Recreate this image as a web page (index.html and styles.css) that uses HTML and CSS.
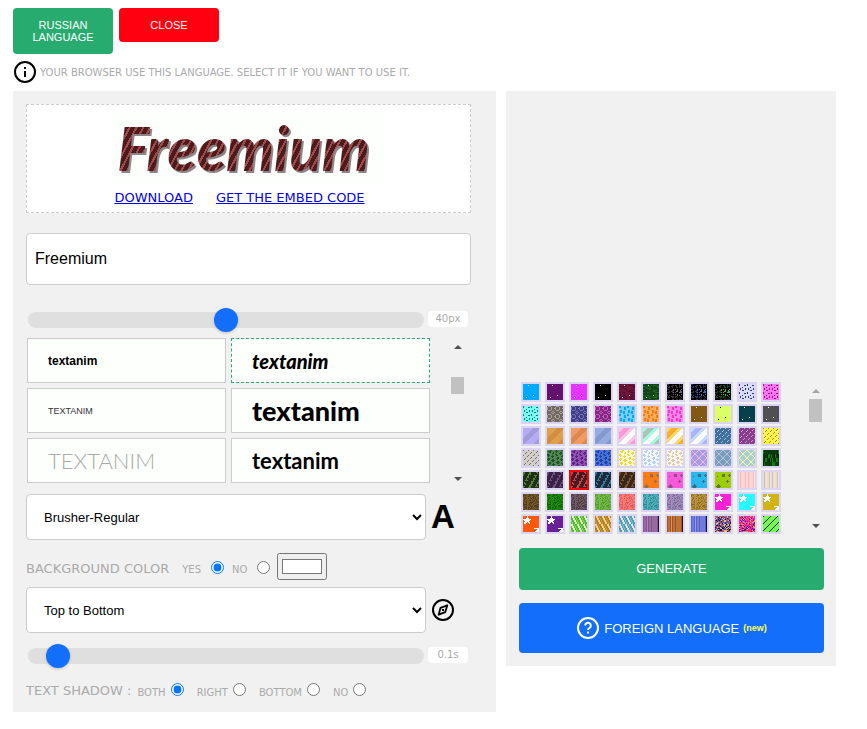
FILE: index.html
```html
<!DOCTYPE html>
<html lang="en">
<head>
<meta charset="utf-8">
<meta name="viewport" content="width=device-width, initial-scale=1">
<title>Text animator</title>
<link rel="stylesheet" href="styles.css">
</head>
<body>
<header class="top">
  <div class="lang-buttons">
    <button class="btn btn-small btn-green" type="button">RUSSIAN LANGUAGE</button>
    <button class="btn btn-small btn-red" type="button">CLOSE</button>
  </div>
  <p class="notice">
    <svg class="icon" viewBox="0 0 24 24" aria-hidden="true"><circle cx="12" cy="12" r="10" fill="none" stroke="currentColor" stroke-width="2"/><path d="M11 7h2v2h-2zM11 11h2v6h-2z" fill="currentColor"/></svg>
    <span>YOUR BROWSER USE THIS LANGUAGE. SELECT IT IF YOU WANT TO USE IT.</span>
  </p>
</header>
<main class="columns">
  <section class="panel editor">
    <div class="result">
      <div class="artwork"><span class="artwork-text">Freemium</span></div>
      <nav class="result-links"><a href="#download">DOWNLOAD</a><a href="#embed">GET THE EMBED CODE</a></nav>
    </div>
    <input class="text-field" type="text" value="Freemium" aria-label="Text">
    <div class="slider-row">
      <input class="slider" type="range" min="0" max="80" value="40" aria-label="Font size">
      <output class="value">40px</output>
    </div>
    <div class="font-picker">
      <div class="font-grid">
        <button class="font-card face-pixel" type="button">textanim</button>
        <button class="font-card face-brush selected" type="button">textanim</button>
        <button class="font-card face-narrow" type="button">TEXTANIM</button>
        <button class="font-card face-heavy" type="button">textanim</button>
        <button class="font-card face-dotted" type="button">TEXTANIM</button>
        <button class="font-card face-round" type="button">textanim</button>
      </div>
      <div class="scrollbar" aria-hidden="true"><i class="arrow up"></i><i class="thumb thumb-fonts"></i><i class="arrow down"></i></div>
    </div>
    <div class="select-row">
      <select class="select" aria-label="Font"><option>Brusher-Regular</option></select>
      <span class="letter-icon" aria-hidden="true">A</span>
    </div>
    <div class="options options-bg">
      <span class="caption">BACKGROUND COLOR</span>
      <label class="choice choice-wide">YES <input type="radio" name="bg" checked></label>
      <label class="choice choice-wide">NO <input type="radio" name="bg"></label>
      <input class="color" type="color" value="#ffffff" aria-label="Background color">
    </div>
    <div class="select-row">
      <select class="select" aria-label="Direction"><option>Top to Bottom</option></select>
      <svg class="icon" viewBox="0 0 24 24" aria-hidden="true"><circle cx="12" cy="12" r="10" fill="none" stroke="currentColor" stroke-width="2"/><path d="M16.3 7.3 14.2 14.2 7.7 16.7 9.5 9.8z" fill="none" stroke="currentColor" stroke-width="1.8" stroke-linejoin="round"/><path d="M11 11h2v2h-2z" fill="currentColor"/></svg>
    </div>
    <div class="slider-row slider-row-speed">
      <input class="slider" type="range" min="0" max="105" value="5" aria-label="Speed">
      <output class="value">0.1s</output>
    </div>
    <div class="options options-shadow">
      <span class="caption">TEXT SHADOW :</span>
      <label class="choice">BOTH <input type="radio" name="shadow" checked></label>
      <label class="choice">RIGHT <input type="radio" name="shadow"></label>
      <label class="choice">BOTTOM <input type="radio" name="shadow"></label>
      <label class="choice">NO <input type="radio" name="shadow"></label>
    </div>
  </section>
  <section class="panel textures">
    <div class="texture-picker">
      <div class="swatches" id="swatches"></div>
      <div class="scrollbar" aria-hidden="true"><i class="arrow up dim"></i><i class="thumb thumb-textures"></i><i class="arrow down"></i></div>
    </div>
    <button class="btn btn-green btn-generate" type="button">GENERATE</button>
    <button class="btn btn-blue btn-foreign" type="button">
      <svg class="icon" viewBox="0 0 24 24" aria-hidden="true"><circle cx="12" cy="12" r="10" fill="none" stroke="currentColor" stroke-width="2"/><path d="M9.2 9.6a2.8 2.8 0 1 1 4.3 2.4c-1 .6-1.5 1-1.5 2" fill="none" stroke="currentColor" stroke-width="2"/><path d="M11 15.5h2v2h-2z" fill="currentColor"/></svg>
      <span>FOREIGN LANGUAGE</span> <small class="new">(new)</small>
    </button>
  </section>
</main>
<script src="swatches.js"></script>
</body>
</html>
```
FILE: styles.css
```css
* { box-sizing: border-box; }
body {
  margin: 0;
  padding: 8px 31px 16px 13px;
  background: #fff;
  color: #000;
  font-family: "DejaVu Sans", Verdana, sans-serif;
  font-size: 13px;
}
button, input, select { font-family: "Liberation Sans", Arial, sans-serif; }
.icon { width: 24px; height: 24px; flex: none; display: block; }

.lang-buttons { display: flex; align-items: flex-start; gap: 6px; }
.btn { border: 0; border-radius: 4px; color: #fff; cursor: pointer; }
.btn-small { width: 100px; padding: 11px 15px; font-size: 11px; line-height: 12px; }
.btn-green { background: #27ab6e; }
.btn-red { background: #ff0010; }
.btn-blue { background: #136ffb; }
.notice {
  display: flex; align-items: center; gap: 3px;
  margin: 6px 0 7px; height: 24px;
  color: #aaa; font-size: 10px;
}
.notice .icon { color: #000; }

.columns { display: grid; grid-template-columns: 483fr 330fr; gap: 10px; align-items: start; }
.panel { background: #f1f1f1; min-width: 0; }
.editor { padding: 13px 25px 11px 13px; }

.result {
  display: flex; flex-direction: column; align-items: center;
  padding: 6px 0;
  border: 1px dashed #ccc; background: #fff;
}
.artwork {
  display: flex; align-items: center; justify-content: center;
  width: 271px; height: 74px; background: #fcfffc;
}
.artwork-text {
  padding: 0 14px 0 4px;
  font: italic 900 60px/72px Lato, sans-serif;
  color: transparent;
  background: repeating-linear-gradient(118deg, #4a1c1e 0 3px, #a5484a 3px 5px, #4a1c1e 5px 6px);
  -webkit-background-clip: text;
  background-clip: text;
  filter: drop-shadow(2px 2px 0 #8c8686);
}
.result-links { display: flex; gap: 23px; padding-right: 18px; line-height: 16px; margin-top: 5px; }
.result-links a { color: #0000ee; }

.text-field {
  display: block; width: 100%; height: 52px; margin-top: 20px; padding: 0 8px;
  border: 1px solid #ccc; border-radius: 4px; background: #fff; font-size: 16px;
}
.slider-row { display: flex; align-items: center; gap: 4px; height: 24px; margin-top: 23px; padding: 0 3px 0 2px; }
.slider-row-speed { margin-top: 11px; }
.slider {
  -webkit-appearance: none; appearance: none;
  flex: 1; min-width: 0; height: 16px; margin: 0;
  border-radius: 8px; background: #dfdfdf;
}
.slider::-webkit-slider-thumb {
  -webkit-appearance: none; appearance: none;
  width: 24px; height: 24px; border-radius: 50%;
  background: #136ffb; box-shadow: 0 1px 3px rgba(0, 0, 0, .2);
}
.value {
  width: 40px; height: 16px; margin-bottom: 2px; border-radius: 4px; background: #fff;
  color: #aaa; font-size: 10px; line-height: 16px; text-align: center;
}

.font-picker { display: flex; gap: 20px; margin-top: 6px; padding: 0 6px 0 1px; }
.font-grid { flex: 1; display: grid; grid-template-columns: 1fr 1fr; gap: 5px; }
.font-card {
  height: 45px; padding: 0 20px; overflow: hidden;
  border: 1px solid #ccc; background: #fcfffc; color: #000; text-align: left; white-space: nowrap;
}
.font-card.selected { border: 1px dashed #27ab6e; }
.face-pixel { font: bold 12px "Liberation Sans", sans-serif; }
.face-brush { font: italic 900 20px Lato, sans-serif; }
.face-narrow { font: 9px "Liberation Sans", sans-serif; color: #333; }
.face-heavy { font: 900 27px Lato, sans-serif; }
.face-dotted { font: 300 22px Lato, sans-serif; color: #aaa; }
.face-round { font: 700 22px Lato, sans-serif; }

.scrollbar { display: flex; flex-direction: column; align-items: center; width: 15px; }
.arrow { width: 0; height: 0; border: 4px solid transparent; }
.arrow.up { border-top: 0; border-bottom-color: #505050; margin-top: 7px; }
.arrow.up.dim { border-bottom-color: #a3a3a3; }
.arrow.down { border-bottom: 0; border-top-color: #505050; margin-top: auto; }
.font-picker .scrollbar { padding-bottom: 2px; }
.thumb { width: 13px; background: #c1c1c1; }
.thumb-fonts { height: 17px; margin-top: 28px; }
.thumb-textures { height: 23px; margin-top: 6px; }

.select-row { display: grid; grid-template-columns: 1fr 40px; align-items: center; gap: 5px; }
.font-picker + .select-row { margin-top: 11px; }
.select {
  width: 100%; height: 46px; padding: 0 0 0 13px;
  border: 1px solid #ccc; border-radius: 4px; background: #fff; color: #000; font-size: 13px;
}
.letter-icon { font: bold 33px/40px "Liberation Sans", Arial, sans-serif; }

.options { display: flex; align-items: center; color: #aaa; }
.options-bg { height: 27px; margin: 13px 0 7px; }
.options-shadow { height: 24px; margin-top: 9px; }
.caption { line-height: 16px; padding-top: 4px; }
.choice { display: flex; align-items: center; gap: 5px; margin-left: 13px; font-size: 10px; line-height: 12px; padding-top: 7px; }
.choice-wide { gap: 10px; }
.choice-wide + .choice-wide { margin-left: 8px; }
.caption + .choice:not(.choice-wide) { margin-left: 6px; }
.choice input { width: 13px; height: 13px; margin: 0 0 6px; }
.color { width: 50px; height: 27px; margin-left: 7px; }

.textures { padding: 291px 12px 13px 13px; }
.texture-picker { display: flex; justify-content: space-between; height: 153px; padding: 0 1px 0 2px; }
.swatches { display: grid; grid-template-columns: repeat(11, 20px); grid-auto-rows: 20px; gap: 2px 4px; }
.swatch { padding: 2px; border: 0; background: #dcd4f4; }
.swatch.selected { background: #ff0010; }
.swatch svg { display: block; width: 16px; height: 16px; }
.texture-picker .scrollbar { padding-bottom: 7px; }
.btn-generate { display: block; width: 100%; height: 42px; margin-top: 13px; padding-bottom: 3px; font-size: 13px; }
.btn-foreign {
  display: flex; align-items: center; justify-content: center; gap: 4px;
  width: 100%; height: 50px; margin-top: 13px; font-size: 13px;
}
.new { color: #ffff4d; font-size: 9px; font-weight: bold; }
```
FILE: swatches.js
```js
// Each pattern maps a pixel of a 16x16 tile to an index in the swatch's colours.
const hash = (x, y) => ((x * 73 + y * 151 + x * y * 37 + ((x * x) ^ (y * 13)) * 11) >>> 1) % 17;
const rows = (art) => (x, y) => +(art[y % art.length][x % art[0].length]);
const near = (x, y, px, py, r) => (x - px) ** 2 + (y - py) ** 2 <= r * r;

const patterns = {
  dots: (x, y) => +((x === 5 && y === 1) || (x === 10 && y === 11) || (x === 3 && y === 13)),
  weave: (x, y) => patterns.dots(x, y) ? 2 : +(hash(x >> 1, y) < 6),
  glyphs: (x, y) => (x % 4 < 3 && hash(x, y) < 9 && y % 5 !== 4) ? 1 + +(y > 4 && y < 12 && x > 5) : 0,
  dashes: rows(["10000000", "10000110", "00000000", "00010000", "01000010", "01000010", "00011000", "00000000"]),
  rings: rows(["01110000", "10001000", "10001001", "10001000", "01110000", "00000110", "00001001", "00000110"]),
  bricks: rows(["11000000", "11000110", "00000110", "00000110", "01100000", "01101100", "01101100", "00001100"]),
  bands: (x, y) => { const d = x + y; return +((d > 9 && d < 17) || d > 25); },
  candy: (x, y) => { const d = x + y; return d < 4 ? 1 : d < 11 ? 0 : d < 15 ? 1 : d < 22 ? 2 : d < 26 ? 1 : 0; },
  slashes: (x, y) => +((x + y) % 5 === 0 && (x - y + 32) % 6 < 4),
  blobs: rows(["0001100001000011", "0111000011100000", "0011001001000110", "0000011000001110", "1100000011000100", "1110010001100001", "0100111000000011", "0000010000110000",
    "0110000001110010", "1110011000100111", "0100111100000010", "0000011000110000", "0011000001111000", "0111001000110011", "0010011100000001", "1000001000011000"]),
  tiger: (x, y) => +((2 * x + y + 1) % 13 < 5 && (y + (x >> 1) * 3) % 7 < 5),
  lattice: rows(["10000001", "01000010", "00100100", "00011000", "00011000", "00100100", "01000010", "10000001"]),
  grass: (x, y) => hash(x, y >> 2) < 5 ? 1 : hash(x + 1, y >> 2) < 5 ? 2 : 0,
  bubbles: (x, y) => +(near(x, y, 3, 14, 2) || near(x, y, 8, 3, 1.5) || near(x, y, 12, 9, 1) || near(x, y, 14, 3, 1) || near(x, y, 2, 4, .8)),
  curtain: (x) => [0, 1, 0, 2, 0, 0, 1, 2][x % 8],
  grain: (x, y) => hash(x, y) % 3,
  stars: (x, y) => {
    const s = ["00001000", "00001000", "00011100", "11111111", "01111110", "00111100", "01110110", "01100010"];
    if (x < 8 && y < 8) return +s[y][x];
    return +(x > 10 && y > 10 && (x + y > 26 || y === 12));
  },
  zigzag: (x, y) => [0, 1, 1, 0, 2, 0][(x - (y >> 1) - (y >> 3) + 36) % 6],
  wood: (x) => [1, 0, 0, 1, 2, 1, 0, 0, 1, 0, 0, 0, 0, 0, 1, 3][x],
  confetti: (x, y) => hash(x, y) % 5,
  lines: (x, y) => +((x + y) % 7 === 0)
};

const swatches = [
  "dots #00aaff #fff", "dots #63106f #fff", "dots #e733ff #fff", "dots #000 #fff", "weave #6e1539 #4c0e28 #b7d0ff", "weave #14451a #24642b #78ff78",
  "glyphs #000 #43363d #756475", "glyphs #000 #203e5c #3577b5", "glyphs #000 #164823 #1ec44a", "dashes #d9dcff #343563", "dashes #fb75ef #891780",
  "dashes #76fff1 #167a74", "rings #706862 #aaa197", "rings #403f83 #7774bd", "rings #81297f #c75dc5", "bricks #73d0ff #159ff5", "bricks #ffac5c #f67a0c",
  "bricks #ff86e6 #f638c9", "dots #815914 #fff", "dots #dcff63 #000", "dots #06414b #fff", "dots #505050 #fff",
  "bands #b4acf5 #a49bdc", "bands #dfa04b #d08e42", "bands #f09b60 #db8951", "bands #96acde #829acc", "candy #ff9ad8 #ffc5e5 #fff", "candy #a6c8b4 #9effe0 #fff",
  "candy #ffad2c #ffd967 #fff", "candy #acb4ff #c4dcff #fff", "slashes #41709a #9ac5e8", "slashes #854087 #df90dd", "slashes #fff247 #a58d17",
  "slashes #d0cec7 #73716b", "blobs #4e8751 #234f29", "blobs #924fb5 #5b257a", "blobs #4474db #253fa4", "blobs #fffbe4 #f5d71c", "blobs #f5faff #b0ceff",
  "blobs #fffbec #e5c5ae", "lattice #a99be1 #edbbea", "lattice #779dc3 #bdc2c5", "lattice #aad0cb #f7f2b5", "grass #023d06 #0a7f0c #001b00",
  "tiger #222f18 #4e842c", "tiger #382440 #705089", "tiger #481a1e #b84b4b", "tiger #1c2c3c #337b99", "tiger #382817 #7e5630", "bubbles #ff7b14 #8a735c",
  "bubbles #f858db #8c547b", "bubbles #28b8ed #3d6d7b", "bubbles #9cce0b #637922", "curtain #ffd2d2 #ffb8b8 #ffe1d8", "curtain #e8ddce #cfc3b3 #f0e8dd",
  "grain #644820 #795a29 #4f3b1e", "grain #187a06 #228e08 #106000", "grain #5c4950 #725d65 #4c3e44", "grain #65ae3c #76bd48 #559a35", "grain #f36b68 #fc7e79 #dd5b5b",
  "grain #40a2ab #52b3b8 #368996", "grain #9280ae #a38fb9 #7c6b98", "grain #a88432 #bd9639 #8c6e2c", "stars #ff20d4 #fff", "stars #28f8ff #fff", "stars #d1b414 #fff",
  "stars #ff5a0b #fff", "stars #692195 #fff", "zigzag #59b538 #d7ffba #80df59", "zigzag #ae8129 #f2d28a #d19b38", "zigzag #4b9fc4 #f0e2ca #7ebed1",
  "wood #966c9e #80568d #bd7ccb #240e32", "wood #bd7039 #9c5527 #e09550 #24111a", "wood #717cdc #5864c4 #929cff #111232",
  "confetti #4353b9 #eab77c #141624 #9051b0 #c85d43", "confetti #ff25c4 #ff3042 #4016c5 #ff9d38 #cb1bf1", "lines #75f653 #102e0c"
];

document.getElementById("swatches").innerHTML = swatches.map((entry, n) => {
  const [name, ...colours] = entry.split(" ");
  const paths = colours.map(() => "");
  for (let y = 0; y < 16; y++) {
    for (let x = 0; x < 16; x++) paths[patterns[name](x, y)] += `M${x} ${y}h1v1h-1z`;
  }
  const art = colours.map((c, i) => `<path fill="${c}" d="${paths[i]}"/>`).join("");
  return `<button type="button" class="swatch${n === 46 ? " selected" : ""}" aria-label="Texture ${n + 1}"><svg viewBox="0 0 16 16" shape-rendering="crispEdges">${art}</svg></button>`;
}).join("");
```
